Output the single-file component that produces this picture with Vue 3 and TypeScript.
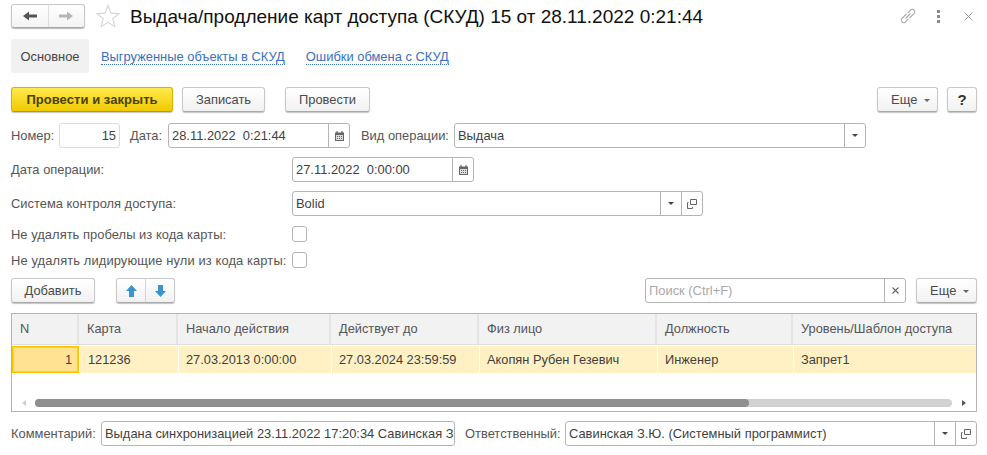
<script setup lang="ts">
const columns: string[] = ['N', 'Карта', 'Начало действия', 'Действует до', 'Физ лицо', 'Должность', 'Уровень/Шаблон доступа']
const cells: string[] = ['1', '121236', '27.03.2013 0:00:00', '27.03.2024 23:59:59', 'Акопян Рубен Гезевич', 'Инженер', 'Запрет1']
</script>

<template>
  <div class="form">
    <header class="title-row">
      <div class="nav">
        <button class="nav-btn">
          <svg width="14" height="12" viewBox="0 0 14 12"><path d="M0 6 6 1.500v3h8v3H6v3z" fill="#555" /></svg>
        </button>
        <button class="nav-btn">
          <svg width="14" height="12" viewBox="0 0 14 12"><path d="M14 6 8 1.500v3H0v3h8v3z" fill="#b5b5b5" /></svg>
        </button>
      </div>
      <svg class="star" width="24" height="24" viewBox="0 0 24 24">
        <path d="M12 1.500l3 7.600 8 .5-6.200 5.100 2 7.900L12 18.300l-6.800 4.300 2-7.900L1 9.600l8-.5z" fill="none" stroke="#d4d4d4" stroke-width="1.100" />
      </svg>
      <h1 class="title">Выдача/продление карт доступа (СКУД) 15 от 28.11.2022 0:21:44</h1>
      <div class="win-icons">
        <svg width="18" height="18" viewBox="0 0 18 18" fill="none" stroke="#a8a8a8" stroke-width="1.100">
          <path d="M7.500 7 2.800 11.700a2.500 2.500 0 0 0 3.500 3.500l3-3" />
          <path d="M10.500 11 15.200 6.300a2.500 2.500 0 0 0-3.500-3.500l-3 3" />
          <path d="M6.500 11.500l5-5" />
        </svg>
        <svg class="dots" width="4" height="13" viewBox="0 0 4 13"><path d="M0 0h3v3H0zM0 5h3v3H0zM0 10h3v3H0z" fill="#8a8a8a" /></svg>
        <svg class="close" width="9" height="9" viewBox="0 0 9 9"><path d="M.5.5l8 8M8.500.5l-8 8" stroke="#999" stroke-width="1" /></svg>
      </div>
    </header>

    <nav class="tabs">
      <span class="tab-active">Основное</span>
      <a class="tab-link">Выгруженные объекты в СКУД</a>
      <a class="tab-link second">Ошибки обмена с СКУД</a>
    </nav>

    <div class="row commands">
      <button class="btn primary">Провести и закрыть</button>
      <button class="btn write">Записать</button>
      <button class="btn post">Провести</button>
      <span class="spacer"></span>
      <button class="btn more">Еще <i class="caret"></i></button>
      <button class="btn help">?</button>
    </div>

    <div class="row fields-1">
      <label class="lbl w-number">Номер:</label>
      <div class="field number"><span class="val right">15</span></div>
      <label class="lbl w-date">Дата:</label>
      <div class="field date">
        <span class="val">28.11.2022&nbsp; 0:21:44</span>
        <span class="addon">
          <svg width="9" height="10" viewBox="0 0 9 10"><path d="M0 1.500h9V10H0z" fill="#666" /><path d="M1 4h7v5H1z" fill="#ddd" /><path d="M1.500 0h1v2h-1zM6.500 0h1v2h-1z" fill="#555" /><path d="M2 5h1v1H2zM4 5h1v1H4zM6 5h1v1H6zM2 7h1v1H2zM4 7h1v1H4zM6 7h1v1H6z" fill="#666" /></svg>
        </span>
      </div>
      <label class="lbl w-kind">Вид операции:</label>
      <div class="field kind">
        <span class="val">Выдача</span>
        <span class="addon"><i class="caret dark"></i></span>
      </div>
    </div>

    <div class="row fields-2">
      <label class="lbl w-wide">Дата операции:</label>
      <div class="field date">
        <span class="val">27.11.2022&nbsp; 0:00:00</span>
        <span class="addon">
          <svg width="9" height="10" viewBox="0 0 9 10"><path d="M0 1.500h9V10H0z" fill="#666" /><path d="M1 4h7v5H1z" fill="#ddd" /><path d="M1.500 0h1v2h-1zM6.500 0h1v2h-1z" fill="#555" /><path d="M2 5h1v1H2zM4 5h1v1H4zM6 5h1v1H6zM2 7h1v1H2zM4 7h1v1H4zM6 7h1v1H6z" fill="#666" /></svg>
        </span>
      </div>
    </div>

    <div class="row fields-3">
      <label class="lbl w-wide">Система контроля доступа:</label>
      <div class="field system">
        <span class="val">Bolid</span>
        <span class="addon"><i class="caret dark"></i></span>
        <span class="addon">
          <svg width="10" height="10" viewBox="0 0 10 10" fill="none" stroke="#666"><path d="M3.500.5h6v5h-6z" /><path d="M1.500 3.500h-1v6h5V8" /></svg>
        </span>
      </div>
    </div>

    <div class="row check-1">
      <label class="lbl w-wide">Не удалять пробелы из кода карты:</label>
      <span class="check"></span>
    </div>
    <div class="row check-2">
      <label class="lbl w-wide">Не удалять лидирующие нули из кода карты:</label>
      <span class="check"></span>
    </div>

    <div class="row table-bar">
      <button class="btn add">Добавить</button>
      <div class="arrows">
        <button class="arrow">
          <svg width="11" height="12" viewBox="0 0 11 12"><path d="M5.500 0 11 6H8v6H3V6H0z" fill="#3b94d0" /></svg>
        </button>
        <button class="arrow">
          <svg width="11" height="12" viewBox="0 0 11 12"><path d="M5.500 12 11 6H8V0H3v6H0z" fill="#3b94d0" /></svg>
        </button>
      </div>
      <span class="spacer"></span>
      <div class="field search">
        <span class="val placeholder">Поиск (Ctrl+F)</span>
        <span class="addon">
          <svg width="7" height="7" viewBox="0 0 7 7"><path d="M.5.5l6 6M6.500.5l-6 6" stroke="#666" stroke-width="1.100" /></svg>
        </span>
      </div>
      <button class="btn more second-more">Еще <i class="caret"></i></button>
    </div>

    <section class="table">
      <div class="grid head">
        <div v-for="c in columns" :key="c" class="th">{{ c }}</div>
      </div>
      <div class="grid body-row">
        <div v-for="(c, i) in cells" :key="i" class="td" :class="{ current: i === 0 }">{{ c }}</div>
      </div>
      <div class="empty"></div>
      <div class="scrollbar">
        <i class="sb-arrow left"></i>
        <div class="track"><div class="thumb"></div></div>
        <i class="sb-arrow rightward"></i>
      </div>
    </section>

    <div class="row footer">
      <label class="lbl w-comment">Комментарий:</label>
      <div class="field comment"><span class="val clip">Выдана синхронизацией 23.11.2022 17:20:34 Савинская З</span></div>
      <label class="lbl w-resp">Ответственный:</label>
      <div class="field resp">
        <span class="val">Савинская З.Ю. (Системный программист)</span>
        <span class="addon"><i class="caret dark"></i></span>
        <span class="addon">
          <svg width="10" height="10" viewBox="0 0 10 10" fill="none" stroke="#666"><path d="M3.500.5h6v5h-6z" /><path d="M1.500 3.500h-1v6h5V8" /></svg>
        </span>
      </div>
    </div>
  </div>
</template>

<style>
html, body { background: #fff; }
</style>

<style scoped>
.form {
  width: 987px;
  height: 455px;
  box-sizing: border-box;
  padding: 4px 10px 0 11px;
  font-family: "Liberation Sans", Arial, sans-serif;
  font-size: 12.9px;
  color: #4a4a4a;
  background: #fff;
  overflow: hidden;
}
button { font: inherit; color: inherit; padding: 0; }
.row { display: flex; align-items: center; }
.spacer { flex: 1; }

.title-row { display: flex; align-items: center; height: 24px; }
.nav {
  display: flex; width: 74px; height: 24px; box-sizing: border-box;
  border: 1px solid #c8c8c8; border-bottom-color: #a8a8a8; border-radius: 3px;
  box-shadow: 0 1px 1px #bbb;
  background: linear-gradient(#fff, #f3f3f3);
}
.nav-btn { flex: 1; border: 0; background: none; display: flex; align-items: center; justify-content: center; }
.nav-btn + .nav-btn { border-left: 1px solid #ddd; }
.star { margin-left: 11px; }
.title { margin: 2px 0 0 10px; font-size: 19px; font-weight: 400; color: #111; white-space: nowrap; }
.win-icons { margin-left: auto; display: flex; align-items: center; padding-right: 4px; }
.dots { margin-left: 20px; }
.close { margin-left: 23px; }

.tabs { display: flex; align-items: center; height: 34px; margin-top: 11px; }
.tab-active {
  width: 78px; height: 34px; line-height: 36px; text-align: center;
  background: #f1f1f1; border-radius: 3px; color: #444;
}
.tab-link { color: #3a6fc0; border-bottom: 1px dotted #3a6fc0; line-height: 14px; margin: 2px 0 0 12px; }
.tab-link.second { margin-left: 21px; }

.btn {
  height: 25px; box-sizing: border-box;
  border: 1px solid #c8c8c8; border-bottom-color: #a9a9a9; border-radius: 3px;
  box-shadow: 0 1px 1px #c4c4c4;
  background: linear-gradient(#fff, #f1f1f1);
  color: #4a4a4a; white-space: nowrap;
}
.commands { height: 25px; margin-top: 14px; }
.primary {
  width: 162px; font-size: 13px; font-weight: 700; letter-spacing: 0.05px; color: #4a4200;
  background: linear-gradient(#ffe94d, #f0cb00);
  border-color: #d3b400; border-bottom-color: #b89c00;
}
.write { width: 83px; margin-left: 9px; }
.post { width: 85px; margin-left: 20px; }
.more { width: 61px; padding-left: 6px; }
.help { width: 30px; margin-left: 9px; font-weight: 700; font-size: 15px; color: #333; }
.caret {
  display: inline-block; width: 0; height: 0; vertical-align: 2px; margin-left: 3px;
  border-left: 3px solid transparent; border-right: 3px solid transparent; border-top: 3px solid #666;
}
.caret.dark { border-top-color: #444; margin: 0; vertical-align: middle; }

.lbl { white-space: nowrap; flex: none; color: #555; }
.field {
  height: 25px; box-sizing: border-box; display: flex; align-items: center; flex: none;
  border: 1px solid #b4b4b4; border-radius: 3px; background: #fff;
}
.val { flex: 1; min-width: 0; padding: 0 3px; white-space: nowrap; color: #3f3f3f; }
.right { text-align: right; }
.clip { overflow: hidden; padding-right: 0; }
.placeholder { color: #a9a9a9; }
.addon {
  flex: none; width: 20px; height: 100%; display: flex; align-items: center; justify-content: center;
  border-left: 1px solid #b4b4b4;
}

.fields-1 { height: 25px; margin-top: 11px; }
.w-number { width: 48px; }
.number { width: 61px; border-color: #dcdcdc; }
.w-date { width: 38px; margin-left: 10px; }
.date { width: 182px; }
.w-kind { width: 93px; margin-left: 11px; }
.kind { width: 412px; }
.fields-2 { height: 25px; margin-top: 9px; }
.w-wide { width: 281px; }
.fields-3 { height: 25px; margin-top: 9px; }
.system { width: 411px; }
.check {
  width: 15px; height: 16px; box-sizing: border-box; border: 1px solid #b4b4b4; border-radius: 3px; background: #fff;
}
.check-1 { height: 16px; margin-top: 10px; }
.check-1 .lbl { letter-spacing: 0.05px; }
.check-2 { height: 16px; margin-top: 10px; }
.check-2 .lbl { letter-spacing: 0.12px; }

.table-bar { height: 25px; margin-top: 10px; }
.add { width: 84px; }
.arrows {
  margin-left: 21px; width: 59px; height: 25px; box-sizing: border-box; display: flex;
  border: 1px solid #c8c8c8; border-bottom-color: #a9a9a9; border-radius: 3px;
  box-shadow: 0 1px 1px #c4c4c4;
  background: linear-gradient(#fff, #f1f1f1);
}
.arrow { flex: 1; border: 0; background: none; display: flex; align-items: center; justify-content: center; }
.arrow + .arrow { border-left: 1px solid #d4d4d4; }
.search { width: 261px; }
.second-more { margin-left: 10px; }

.table {
  margin-top: 10px; height: 99px; width: 966px; box-sizing: border-box; font-size: 12.8px;
  border: 1px solid #b4b4b4; display: flex; flex-direction: column;
}
.grid { display: grid; grid-template-columns: 67px 99px 153px 148px 178px 136px 1fr; }
.head { height: 31px; background: #f2f2f2; border-bottom: 1px solid #dedede; box-sizing: border-box; }
.th { line-height: 30px; padding-left: 8px; border-left: 2px solid #e4e4e4; color: #555; margin-left: -2px; white-space: nowrap; }
.th:first-child { border-left: 0; margin-left: 0; }
.body-row { height: 27px; margin-top: 1px; background: #fff1c4; }
.td { line-height: 27px; padding-left: 7px; border-left: 1px solid #fff; color: #3f3f3f; white-space: nowrap; }
.td:first-child { border-left: 0; }
.td:nth-child(2) { padding-left: 8px; }
.td.current {
  background: #ffe393; border: 1px solid #f5c200; box-sizing: border-box; line-height: 25px;
  text-align: right; padding: 0 6px 0 0; box-shadow: inset 0 0 0 1px #f7cf4a;
}
.empty { flex: 1; }
.scrollbar { height: 15px; display: flex; align-items: center; padding-bottom: 2px; box-sizing: border-box; }
.track { flex: 1; height: 8px; margin: 0 10px 0 9px; background: #d2d2d2; border-radius: 4px; }
.thumb { width: 714px; height: 8px; background: #8f8f8f; border-radius: 4px; }
.sb-arrow { width: 0; height: 0; border-top: 3px solid transparent; border-bottom: 3px solid transparent; }
.sb-arrow.left { margin-left: 10px; border-right: 4px solid #ccc; }
.sb-arrow.rightward { margin-right: 10px; border-left: 4px solid #555; }

.footer { height: 25px; margin-top: 9px; }
.w-comment { width: 90px; }
.comment { width: 354px; }
.w-resp { width: 100px; margin-left: 10px; }
.resp { width: 412px; }
</style>
